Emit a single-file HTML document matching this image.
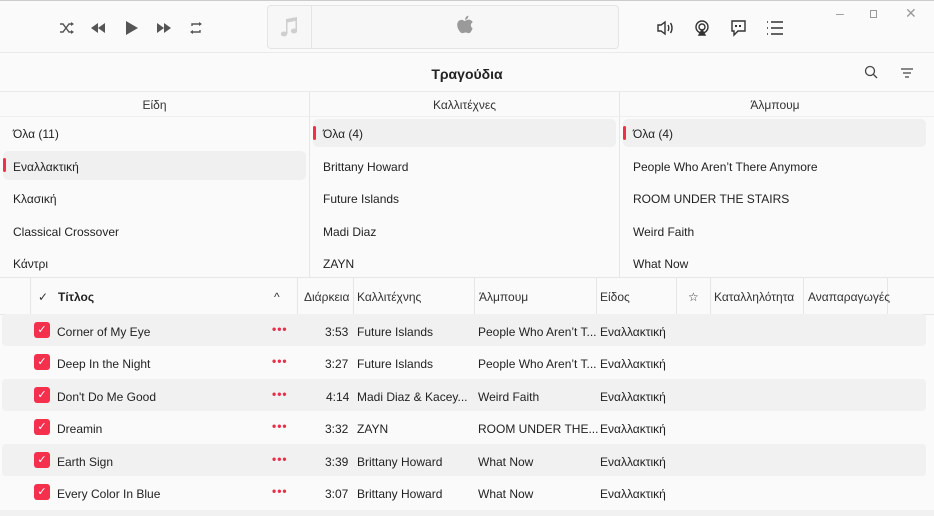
<!DOCTYPE html>
<html><head><meta charset="utf-8"><style>
*{box-sizing:border-box;margin:0;padding:0}
body{width:934px;height:516px;overflow:hidden;background:#fafafa;font-family:"Liberation Sans",sans-serif;font-size:12px;color:#222;position:relative}
.a{position:absolute}
div.a{margin-top:1px}
.ic{position:absolute;color:#444}
.hl{background:#f0f0f0;border-radius:5px}
.bar{position:absolute;left:3px;width:3px;height:14px;background:#f0304a;border-radius:2px}
.vl{position:absolute;width:1px;background:#e6e6e6}
.hd{position:absolute;top:290px;color:#333}
.row{position:absolute;left:2px;width:924px;height:32px}
.cb{position:absolute;left:34px;width:16px;height:16px;background:#f5304d;border-radius:3px;color:#fff;font-size:11px;line-height:16px;text-align:center}
.dots{position:absolute;left:272px;color:#e8304a;font-weight:bold;letter-spacing:1px;font-size:12px}
</style></head><body>
<div class="a" style="left:0;top:0;width:934px;height:1px;background:#ccc;margin:0"></div>
<svg class="a" style="left:58px;top:18px" width="160" height="20" viewBox="0 0 160 20" fill="#555">
<path d="M2 6h3l6 8h3M2 14h3l6-8h3" stroke="#555" stroke-width="1.4" fill="none"/><path d="M13 4l3 2-3 2zM13 12l3 2-3 2z"/>
<path d="M40 10l7-5v10zM33 10l7-5v10z"/>
<path d="M68 3l12 7-12 7z"/>
<path d="M99 5l7 5-7 5zM106 5l7 5-7 5z"/>
<path d="M134 8v-2h8M142 12v2h-8" stroke="#555" stroke-width="1.4" fill="none"/><path d="M141 4l3 2-3 2zM135 12l-3 2 3 2z"/>
</svg>
<div class="a" style="left:267px;top:5px;width:352px;height:44px;border:1px solid #e4e4e4;border-radius:4px;background:#f7f7f7;margin:0"></div>
<div class="a" style="left:311px;top:6px;width:1px;height:42px;background:#e4e4e4;margin:0"></div>
<svg class="a" style="left:280px;top:16px" width="20" height="22" viewBox="0 0 20 22" fill="#cfcfcf"><path d="M6 3l11-2v14h-1.5V5L7.5 6.5V18H6z"/><ellipse cx="4" cy="18" rx="3.2" ry="2.5"/><ellipse cx="14" cy="15" rx="3.2" ry="2.5"/></svg>
<svg class="a" style="left:455px;top:14px" width="20" height="24" viewBox="0 0 18 21" fill="#9a9a9a"><path d="M9 6c1.5-1 3-1.5 4.5-1 1.5.5 2.2 1.5 2.5 2-2 1-2.5 4-.2 5.5-.6 2-2 4.5-3.3 4.5-1 0-1.5-.6-3-.6s-2 .6-3 .6C5 17 2 13 2 9.5 2 6 4.5 5 6 5c1.3 0 2 .9 3 1z"/><path d="M9 5c0-1.8 1.3-3.5 3-3.8.2 1.8-1.2 3.6-3 3.8z"/></svg>
<svg class="a" style="left:656px;top:18px" width="130" height="20" viewBox="0 0 130 20" fill="none" stroke="#333" stroke-width="1.4">
<path d="M2 7h3l4-3v12l-4-3H2z"/><path d="M12 7c1 1.5 1 4.5 0 6M14.5 5c2 3 2 7 0 10"/>
<circle cx="46" cy="9" r="6"/><circle cx="46" cy="9" r="3"/><path d="M43 17l3-5 3 5z" fill="#333"/>
<path d="M76 3h13v10h-7l-4 4v-4h-2z"/><path d="M80 7v2M84 7v2" stroke-width="2"/>
<path d="M115 4h12M115 10h12M115 16h12M111 4h1M111 10h1M111 16h1"/>
</svg>
<div class="a" style="left:836px;top:4px;color:#999;font-size:14px">–</div>
<div class="a" style="left:870px;top:9px;width:7px;height:8px;border:1px solid #999"></div>
<div class="a" style="left:905px;top:4px;color:#999;font-size:14px">✕</div>
<div class="a" style="left:0;top:52px;width:934px;height:1px;background:#eaeaea;margin:0"></div>
<div class="a" style="left:0;top:65px;width:934px;text-align:center;font-weight:bold;font-size:14px;color:#222">Τραγούδια</div>
<svg class="a" style="left:863px;top:65px" width="50" height="16" viewBox="0 0 50 16" fill="none" stroke="#444" stroke-width="1.3"><circle cx="7" cy="6" r="4.5"/><path d="M10.5 9.5l3.5 3.5"/><path d="M38 4h12M40 8h8M42 12h4"/></svg>
<div class="a" style="left:0;top:91px;width:934px;height:1px;background:#eaeaea;margin:0"></div>
<div class="vl" style="left:309px;top:92px;height:186px"></div>
<div class="vl" style="left:619px;top:92px;height:186px"></div>
<div class="a" style="left:0;top:97px;width:309px;text-align:center;color:#333">Είδη</div>
<div class="a" style="left:310px;top:97px;width:309px;text-align:center;color:#333">Καλλιτέχνες</div>
<div class="a" style="left:620px;top:97px;width:310px;text-align:center;color:#333">Άλμπουμ</div>
<div class="a" style="left:0;top:116px;width:934px;height:1px;background:#efefef;margin:0"></div>
<div class="a hl" style="left:3px;top:151px;width:303px;height:29px;margin:0"></div><div class="bar" style="left:3px;top:158px"></div>
<div class="a hl" style="left:313px;top:119px;width:303px;height:28px;margin:0"></div><div class="bar" style="left:313px;top:126px"></div>
<div class="a hl" style="left:623px;top:119px;width:303px;height:28px;margin:0"></div><div class="bar" style="left:623px;top:126px"></div>
<div class="a" style="left:13px;top:126px">Όλα (11)</div>
<div class="a" style="left:13px;top:159px">Εναλλακτική</div>
<div class="a" style="left:13px;top:191px">Κλασική</div>
<div class="a" style="left:13px;top:224px">Classical Crossover</div>
<div class="a" style="left:13px;top:256px">Κάντρι</div>
<div class="a" style="left:323px;top:126px">Όλα (4)</div>
<div class="a" style="left:323px;top:159px">Brittany Howard</div>
<div class="a" style="left:323px;top:191px">Future Islands</div>
<div class="a" style="left:323px;top:224px">Madi Diaz</div>
<div class="a" style="left:323px;top:256px">ZAYN</div>
<div class="a" style="left:633px;top:126px">Όλα (4)</div>
<div class="a" style="left:633px;top:159px">People Who Aren’t There Anymore</div>
<div class="a" style="left:633px;top:191px">ROOM UNDER THE STAIRS</div>
<div class="a" style="left:633px;top:224px">Weird Faith</div>
<div class="a" style="left:633px;top:256px">What Now</div>
<div class="a" style="left:0;top:277px;width:934px;height:1px;background:#e6e6e6;margin:0"></div>
<div class="a" style="left:0;top:314px;width:934px;height:1px;background:#e6e6e6;margin:0"></div>
<div class="vl" style="left:30px;top:278px;height:36px"></div>
<div class="vl" style="left:297px;top:278px;height:36px"></div>
<div class="vl" style="left:353px;top:278px;height:36px"></div>
<div class="vl" style="left:474px;top:278px;height:36px"></div>
<div class="vl" style="left:596px;top:278px;height:36px"></div>
<div class="vl" style="left:676px;top:278px;height:36px"></div>
<div class="vl" style="left:710px;top:278px;height:36px"></div>
<div class="vl" style="left:803px;top:278px;height:36px"></div>
<div class="vl" style="left:887px;top:278px;height:36px"></div>
<div class="hd" style="left:38px">✓</div>
<div class="hd" style="left:58px;font-weight:bold;color:#222">Τίτλος</div>
<div class="hd" style="left:274px">^</div>
<div class="hd" style="left:304px">Διάρκεια</div>
<div class="hd" style="left:357px">Καλλιτέχνης</div>
<div class="hd" style="left:479px">Άλμπουμ</div>
<div class="hd" style="left:600px">Είδος</div>
<div class="hd" style="left:688px">☆</div>
<div class="hd" style="left:714px">Καταλληλότητα</div>
<div class="hd" style="left:808px">Αναπαραγωγές</div>

<div class="row" style="top:314px;background:#f1f1f1;border-radius:4px"></div>
<div class="row" style="top:379px;background:#f1f1f1;border-radius:4px"></div>
<div class="row" style="top:444px;background:#f1f1f1;border-radius:4px"></div>

<div class="cb" style="top:322px">✓</div><div class="a" style="left:57px;top:324px">Corner of My Eye</div><div class="dots" style="top:322px">•••</div><div class="a" style="left:325px;top:324px">3:53</div><div class="a" style="left:357px;top:324px">Future Islands</div><div class="a" style="left:478px;top:324px">People Who Aren’t T...</div><div class="a" style="left:600px;top:324px">Εναλλακτική</div>
<div class="cb" style="top:354px">✓</div><div class="a" style="left:57px;top:356px">Deep In the Night</div><div class="dots" style="top:354px">•••</div><div class="a" style="left:325px;top:356px">3:27</div><div class="a" style="left:357px;top:356px">Future Islands</div><div class="a" style="left:478px;top:356px">People Who Aren’t T...</div><div class="a" style="left:600px;top:356px">Εναλλακτική</div>
<div class="cb" style="top:387px">✓</div><div class="a" style="left:57px;top:389px">Don't Do Me Good</div><div class="dots" style="top:387px">•••</div><div class="a" style="left:326px;top:389px">4:14</div><div class="a" style="left:357px;top:389px">Madi Diaz &amp; Kacey...</div><div class="a" style="left:478px;top:389px">Weird Faith</div><div class="a" style="left:600px;top:389px">Εναλλακτική</div>
<div class="cb" style="top:419px">✓</div><div class="a" style="left:57px;top:421px">Dreamin</div><div class="dots" style="top:419px">•••</div><div class="a" style="left:325px;top:421px">3:32</div><div class="a" style="left:357px;top:421px">ZAYN</div><div class="a" style="left:478px;top:421px">ROOM UNDER THE...</div><div class="a" style="left:600px;top:421px">Εναλλακτική</div>
<div class="cb" style="top:452px">✓</div><div class="a" style="left:57px;top:454px">Earth Sign</div><div class="dots" style="top:452px">•••</div><div class="a" style="left:325px;top:454px">3:39</div><div class="a" style="left:357px;top:454px">Brittany Howard</div><div class="a" style="left:478px;top:454px">What Now</div><div class="a" style="left:600px;top:454px">Εναλλακτική</div>
<div class="cb" style="top:484px">✓</div><div class="a" style="left:57px;top:486px">Every Color In Blue</div><div class="dots" style="top:484px">•••</div><div class="a" style="left:325px;top:486px">3:07</div><div class="a" style="left:357px;top:486px">Brittany Howard</div><div class="a" style="left:478px;top:486px">What Now</div><div class="a" style="left:600px;top:486px">Εναλλακτική</div>
<div class="a" style="left:0;top:510px;width:934px;height:6px;background:#f1f1f1;margin:0"></div>
</body></html>
